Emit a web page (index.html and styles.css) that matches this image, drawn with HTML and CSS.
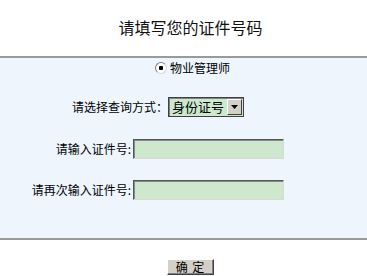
FILE: index.html
```html
<!DOCTYPE html>
<html lang="zh-CN">
<head>
<meta charset="utf-8">
<title>请填写您的证件号码</title>
<link rel="stylesheet" href="styles.css">
</head>
<body>
<h1 class="title">请填写您的证件号码</h1>
<form class="panel">
  <div class="row radio-row">
    <label class="radio-label"><input class="radio" type="radio" name="kind" checked><span>物业管理师</span></label>
  </div>
  <div class="row select-row">
    <span class="select-label">请选择查询方式：</span>
    <span class="select-wrap">
      <select class="select"><option>身份证号</option></select>
      <span class="select-btn"><svg width="7" height="4" viewBox="0 0 7 4"><path d="M0 0H7L3.5 4Z" fill="#000"/></svg></span>
    </span>
  </div>
  <div class="fields">
    <label class="field-label">请输入证件号:</label>
    <input class="field" type="text">
    <label class="field-label">请再次输入证件号:</label>
    <input class="field" type="text">
  </div>
</form>
<div class="actions">
  <button class="btn" type="button">确 定</button>
</div>
</body>
</html>
```
FILE: styles.css
```css
html, body {
  margin: 0;
  padding: 0;
  background: #fff;
  font-family: "Noto Sans CJK SC", "Noto Sans", sans-serif;
  font-size: 12px;
  color: #000;
}
.title {
  margin: 0;
  height: 56px;
  box-sizing: border-box;
  padding: 15px 0 0 14px;
  font-size: 16px;
  font-weight: normal;
  line-height: 24px;
  text-align: center;
  color: #111;
}
.panel {
  margin: 0;
  background: #eef5fd;
  border-top: 2px solid #9a9a9a;
  border-bottom: 2px solid #9a9a9a;
  padding: 0 0 38px 0;
  display: flex;
  flex-direction: column;
}
.row {
  display: flex;
  align-items: center;
  height: 20px;
}
.radio-row {
  padding-left: 155px;
}
.radio-label {
  display: flex;
  align-items: center;
  gap: 3px;
  line-height: 20px;
}
.radio {
  appearance: none;
  -webkit-appearance: none;
  margin: 0;
  width: 12px;
  height: 12px;
  border-radius: 50%;
  border: 1px solid #7f7f7f;
  border-right-color: #d8d8d8;
  border-bottom-color: #d8d8d8;
  box-sizing: border-box;
  background: radial-gradient(circle, #000 0 2px, #fff 2.5px);
}
.select-row {
  margin-top: 19px;
  padding-left: 72px;
}
.select-label {
  line-height: 20px;
}
.select-wrap {
  position: relative;
  display: inline-block;
  width: 76px;
  height: 20px;
}
.select {
  appearance: none;
  -webkit-appearance: none;
  width: 76px;
  height: 20px;
  box-sizing: border-box;
  margin: 0;
  padding: 0 0 0 3px;
  border: 1px solid #404040;
  box-shadow: inset 1px 1px 0 #808080;
  background: #cde9cd;
  font-family: "Noto Sans CJK SC", sans-serif;
  font-size: 13px;
  line-height: 18px;
  color: #000;
}
.select-btn {
  position: absolute;
  right: 2px;
  top: 2px;
  width: 15px;
  height: 16px;
  box-sizing: border-box;
  background: #d4d0c8;
  border: 1px solid;
  border-color: #fff #404040 #404040 #fff;
  display: flex;
  align-items: center;
  justify-content: center;
  pointer-events: none;
}
.fields {
  display: grid;
  grid-template-columns: 131px 151px;
  column-gap: 2px;
  row-gap: 21px;
  margin-top: 22px;
  align-items: center;
}
.field-label {
  text-align: right;
  line-height: 20px;
}
.field {
  margin: 0;
  width: 151px;
  height: 20px;
  box-sizing: border-box;
  border: 1px solid;
  border-color: #555 #d8d8d8 #d8d8d8 #555;
  box-shadow: inset 1px 1px 0 #888;
  background: #cde8cd;
  padding: 0 3px;
  font-size: 12px;
}
.actions {
  display: flex;
  justify-content: center;
  padding: 19px 0 0 14px;
}
.btn {
  margin: 0;
  width: 47px;
  height: 16px;
  box-sizing: border-box;
  padding: 0;
  background: #d4d0c8;
  border: 1px solid;
  border-color: #fff #404040 #404040 #fff;
  box-shadow: inset -1px -1px 0 #808080;
  display: flex;
  align-items: center;
  justify-content: center;
  font-family: "Noto Sans CJK SC", sans-serif;
  font-size: 12px;
  line-height: 14px;
  letter-spacing: 1px;
  color: #000;
}
```
